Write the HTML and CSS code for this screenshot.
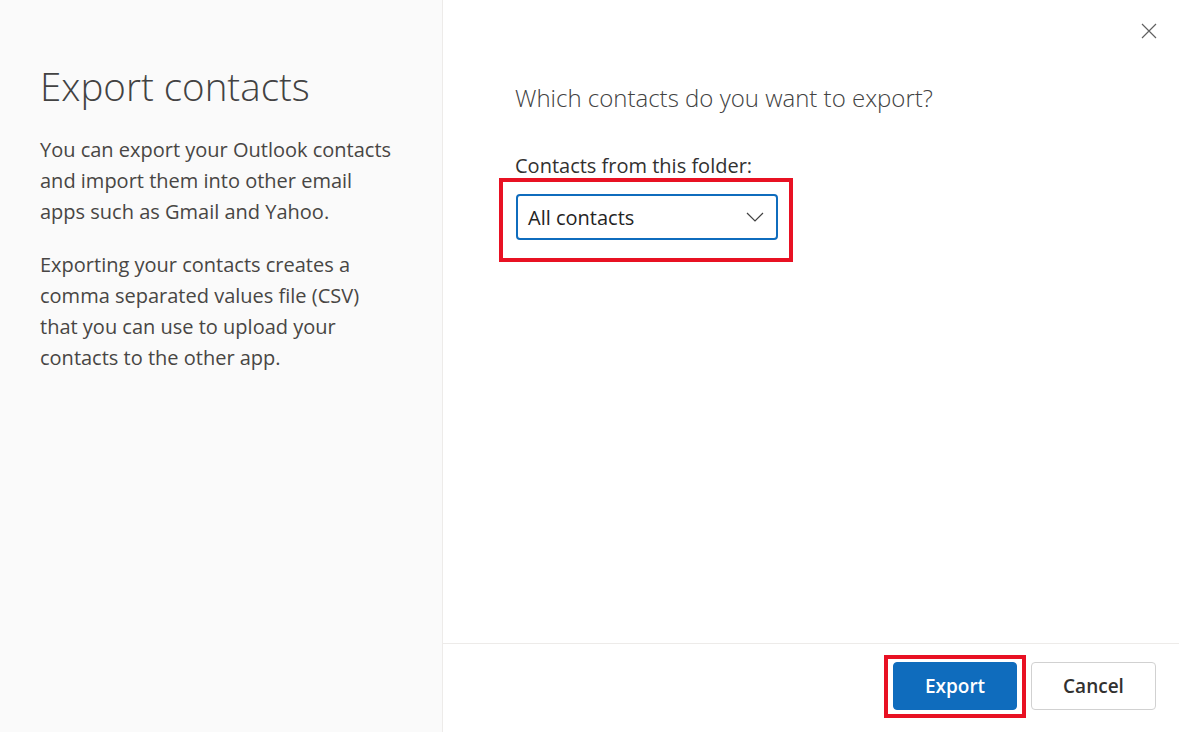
FILE: index.html
```html
<!DOCTYPE html>
<html lang="en">
<head>
    <meta charset="UTF-8">
    <title>Export contacts</title>
    <link rel="stylesheet" href="styles.css">
</head>
<body>
<div class="dialog">
    <aside class="side">
        <h1>Export contacts</h1>
        <p>You can export your Outlook contacts and import them into other email apps such as Gmail and Yahoo.</p>
        <p>Exporting your contacts creates a comma separated values file (CSV) that you can use to upload your contacts to the other app.</p>
    </aside>

    <main class="pane">
        <div class="top-bar">
            <button class="close" aria-label="Close">
                <svg width="16" height="16" viewBox="0 0 16 16"><path d="M1 1 L15 15 M15 1 L1 15" stroke="#616161" stroke-width="1.2" fill="none"/></svg>
            </button>
        </div>
        <div class="content">
            <h2>Which contacts do you want to export?</h2>
            <label class="field-label">Contacts from this folder:</label>
            <div class="mark mark-select">
                <div class="select">
                    <span>All contacts</span>
                    <svg width="18" height="10" viewBox="0 0 18 10"><path d="M1 1 L9 9 L17 1" stroke="#424242" stroke-width="1.2" fill="none"/></svg>
                </div>
            </div>
        </div>
        <footer class="footer">
            <div class="mark mark-btn">
                <button class="btn primary">Export</button>
            </div>
            <button class="btn">Cancel</button>
        </footer>
    </main>
</div>
</body>
</html>
```

FILE: styles.css
```css
* {
    margin: 0;
    padding: 0;
    box-sizing: border-box;
}

body {
    font-family: 'Open Sans', 'Noto Sans', sans-serif;
    color: #323130;
    background: white;
}

.dialog {
    display: flex;
    height: 732px;
}

.side {
    width: 443px;
    flex-shrink: 0;
    background: #fafafa;
    border-right: 1px solid #edebe9;
    padding: 60px 40px 0 40px;
}

.side h1 {
    font-size: 38.5px;
    font-weight: 300;
    color: #424242;
    margin-bottom: 22px;
}

.side p {
    max-width: 354px;
    font-size: 20px;
    line-height: 31px;
    color: #484644;
    margin-bottom: 22px;
}

.pane {
    flex: 1;
    display: flex;
    flex-direction: column;
}

.top-bar {
    display: flex;
    justify-content: flex-end;
    padding: 23px 22px 0 0;
    height: 60px;
}

.close {
    background: none;
    border: none;
    width: 16px;
    height: 16px;
    cursor: pointer;
}

.content {
    flex: 1;
    padding: 21px 0 0 72px;
}

.content h2 {
    font-size: 24px;
    font-weight: 300;
    color: #424242;
    margin-bottom: 38px;
}

.field-label {
    display: block;
    font-size: 20px;
    color: #323130;
    margin-bottom: -1px;
}

/* red highlight boxes */
.mark {
    display: inline-block;
    border: 4px solid #e81123;
}

.mark-select {
    margin-left: -16px;
    padding: 12px 11px 18px 13px;
}

.mark-btn {
    padding: 3px 5px 4px 5px;
}

.select {
    width: 262px;
    height: 46px;
    border: 2px solid #0f6cbd;
    border-radius: 4px;
    display: flex;
    align-items: center;
    justify-content: space-between;
    padding: 0 12px 0 10px;
    font-size: 20px;
    color: #242424;
}

.footer {
    height: 89px;
    border-top: 1px solid #edebe9;
    display: flex;
    justify-content: flex-end;
    align-items: flex-start;
    gap: 5px;
    padding: 11px 23px 0 0;
}

.btn {
    width: 125px;
    height: 48px;
    border: 1px solid #d1d1d1;
    border-radius: 4px;
    background: white;
    font-family: 'Open Sans', 'Noto Sans', sans-serif;
    font-size: 19px;
    font-weight: 600;
    color: #323130;
    cursor: pointer;
}

.footer > .btn {
    margin-top: 7px;
}

.btn.primary {
    width: 124px;
    display: block;
    background: #0f6cbd;
    border-color: #0f6cbd;
    color: white;
}
```
